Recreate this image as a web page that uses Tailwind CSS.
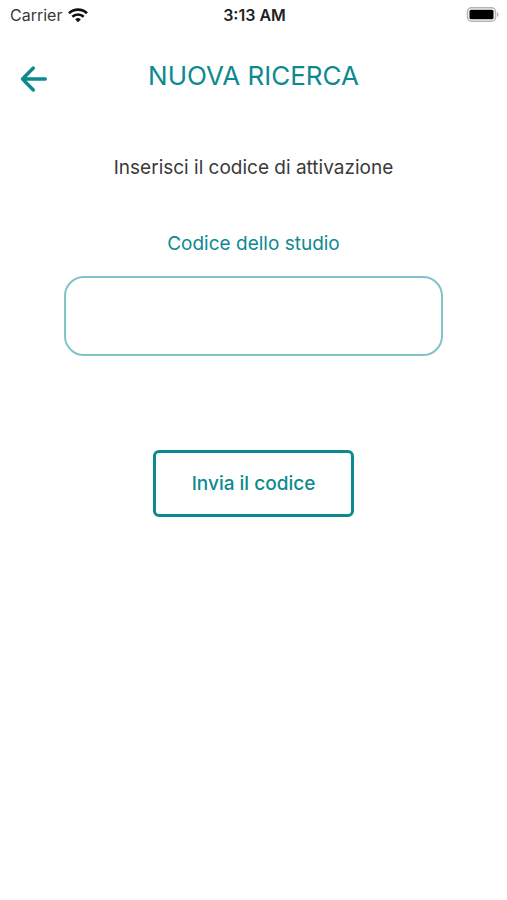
<!DOCTYPE html>
<html lang="it">
<head>
<meta charset="utf-8">
<meta name="viewport" content="width=device-width, initial-scale=1">
<title>Nuova ricerca</title>
<script src="https://cdn.jsdelivr.net/npm/@tailwindcss/browser@4"></script>
</head>
<body class="min-h-screen bg-white font-[Inter,sans-serif] text-[#3a3a3a]">
<div class="grid h-[30px] grid-cols-3 items-center pr-2 pl-[10px] text-base">
  <div class="flex items-center gap-[6px]">
    <span>Carrier</span>
    <svg class="h-[15px] w-5" viewBox="0 0 20 15" fill="none" stroke="#111" stroke-width="2.600" aria-hidden="true">
      <path d="M1 5.200a13 13 0 0 1 18 0M4.300 8.800a8.200 8.200 0 0 1 11.400 0"/>
      <path d="M10 14.200 7.200 11.400a4 4 0 0 1 5.600 0Z" fill="#111" stroke="none"/>
    </svg>
  </div>
  <span class="text-center font-semibold whitespace-nowrap text-[#222222]">3:13 AM</span>
  <svg class="h-4 w-[33px] justify-self-end" viewBox="0 0 33 16" aria-hidden="true">
    <rect x="1.500" y="0.800" width="28" height="13.400" rx="4" fill="none" stroke="#b5b5b5" stroke-width="1.500"/>
    <rect x="3.500" y="2.700" width="24" height="9.600" rx="1.500" fill="#000"/>
    <path d="M31 5v5q1.600-.8 1.600-2.500T31 5Z" fill="#b5b5b5"/>
  </svg>
</div>
<header class="grid h-[90px] grid-cols-[1fr_auto_1fr] items-center px-5">
  <button type="button" aria-label="Indietro" class="justify-self-start pt-2">
    <svg class="h-7 w-7" viewBox="0 0 28 28" fill="none" stroke="#0d8a8f" stroke-width="3.400" stroke-linecap="round" stroke-linejoin="round"><path d="M25.300 14H2.500M13.300 3 2.500 14l10.800 11"/></svg>
  </button>
  <h1 class="text-[26px] text-[#0d8a8f]">NUOVA RICERCA</h1>
</header>
<main class="flex flex-col items-center px-16 pt-8 text-[19px] leading-8">
  <p>Inserisci il codice di attivazione</p>
  <label for="code" class="mt-11 text-[#0d8a8f]">Codice dello studio</label>
  <input id="code" type="text" class="mt-4 h-20 w-full rounded-[20px] border-2 border-[#80c4c7] px-5">
  <button type="button" class="mt-[94px] h-[67px] rounded-md border-3 border-[#0d8a8f] px-9 font-medium text-[#0d8a8f]">Invia il codice</button>
</main>
</body>
</html>
